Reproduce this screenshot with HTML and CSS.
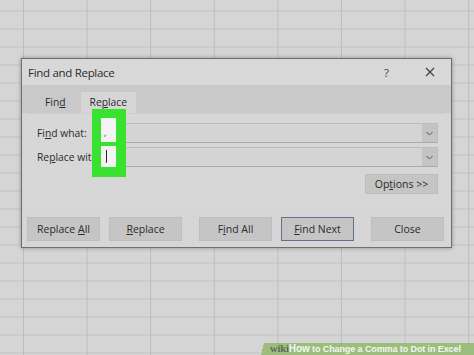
FILE: index.html
```html
<!DOCTYPE html>
<html lang="en">
<head>
  <meta charset="UTF-8" />
  <meta name="viewport" content="width=device-width, initial-scale=1.0"/>
  <title>Find and Replace</title>
  <link rel="stylesheet" href="styles.css">
</head>
<body>

  <!-- Spreadsheet behind the dialog -->
  <div class="sheet">

    <!-- The Find and Replace dialog -->
    <div class="dialog">
      <div class="titlebar">
        <span class="title">Find and Replace</span>
        <span class="help">?</span>
        <svg class="close-x" width="10" height="10" viewBox="0 0 10 10">
          <path d="M1 1 L9 9 M9 1 L1 9" stroke="#3c3c3c" stroke-width="1.1" fill="none"/>
        </svg>
      </div>

      <!-- Tabs -->
      <div class="tabs">
        <div class="tab">Fin<u>d</u></div>
        <div class="tab active">Re<u>p</u>lace</div>
      </div>

      <!-- Tab content -->
      <div class="panel">
        <div class="field-row">
          <label class="field-label">Fi<u>n</u>d what:</label>
          <div class="combo">
            <div class="combo-text"></div>
            <div class="combo-btn">
              <svg width="7" height="5" viewBox="0 0 7 5"><path d="M0.5 1 L3.5 4 L6.5 1" stroke="#555" fill="none"/></svg>
            </div>
          </div>
        </div>
        <div class="field-row">
          <label class="field-label">Re<u>p</u>lace with:</label>
          <div class="combo">
            <div class="combo-text"></div>
            <div class="combo-btn">
              <svg width="7" height="5" viewBox="0 0 7 5"><path d="M0.5 1 L3.5 4 L6.5 1" stroke="#555" fill="none"/></svg>
            </div>
          </div>
        </div>
        <div class="options-row">
          <div class="btn options-btn"><span>Op<u>t</u>ions &gt;&gt;</span></div>
        </div>
      </div>

      <!-- Bottom buttons -->
      <div class="button-row">
        <div class="btn"><span>Replace <u>A</u>ll</span></div>
        <div class="btn"><span><u>R</u>eplace</span></div>
        <div class="btn gap-left"><span>F<u>i</u>nd All</span></div>
        <div class="btn default"><span><u>F</u>ind Next</span></div>
        <div class="btn gap-left"><span>Close</span></div>
      </div>

      <!-- Green highlight over the two text boxes -->
      <div class="highlight">
        <div class="hl-box"><span class="comma">,</span></div>
        <div class="hl-box"><span class="cursor"></span><span class="dot">.</span></div>
      </div>
    </div>

    <!-- wikiHow caption -->
    <div class="caption">
      <span class="wiki">wiki</span><span class="how">How</span> to Change a Comma to Dot in Excel
    </div>
  </div>

</body>
</html>
```

FILE: styles.css
```css
/* Whole page */
body {
  margin: 0;
  padding: 0;
  font-family: "Open Sans", Arial, sans-serif;
  color: #2b2b2b;
}

/* Grey spreadsheet with cell lines */
.sheet {
  position: relative;
  width: 474px;
  height: 355px;
  overflow: hidden;
  background-color: #d5d5d5;
  background-image:
    linear-gradient(to right, #bdbdbd 1px, transparent 1px),
    linear-gradient(to bottom, #c2c2c2 1px, transparent 1px);
  background-size: 63.6px 100%, 100% 18px;
  background-position: 23px 0, 0 10.5px;
  padding-top: 58px;
  box-sizing: border-box;
}

/* Dialog window */
.dialog {
  position: relative;
  margin-left: 21px;
  width: 431px;
  height: 190px;
  box-sizing: border-box;
  border: 1px solid #6f6f6f;
  background-color: #d6d6d6;
  box-shadow: 0 0 4px rgba(0, 0, 0, 0.35);
}

.titlebar {
  display: flex;
  align-items: center;
  height: 26px;
  padding-left: 6px;
  font-size: 11.5px;
  background-color: #d8d8d8;
}

.title {
  flex: 1;
  letter-spacing: -0.3px;
}

.help {
  font-size: 11.5px;
  color: #444;
  margin-right: 36px;
}

.close-x {
  margin-right: 16px;
}

/* Tab strip */
.tabs {
  display: flex;
  align-items: flex-end;
  height: 28px;
  padding-left: 11px;
  background-color: #c9c9c9;
}

.tab {
  font-size: 10.3px;
  height: 21px;
  line-height: 20px;
  padding: 0 12px;
}

.tab.active {
  background-color: #d6d6d6;
  padding: 0 9px;
  margin-left: 3px;
}

/* Tab content panel */
.panel {
  margin: 0 7px 0 6px;
  height: 94px;
  padding: 9px 6px 0 9px;
  box-sizing: border-box;
  background-color: #d7d7d7;
  border-top: 1px solid #cfcfcf;
}

.field-row {
  display: flex;
  align-items: center;
  height: 20px;
  margin-bottom: 4px;
}

.field-label {
  width: 65px;
  font-size: 10.3px;
  white-space: nowrap;
}

.combo {
  flex: 1;
  display: flex;
  height: 20px;
  box-sizing: border-box;
  border: 1px solid #bcbcbc;
  border-bottom-color: #a9a9a9;
  background-color: #d4d4d4;
}

.combo-text {
  flex: 1;
}

.combo-btn {
  width: 15px;
  display: flex;
  align-items: center;
  justify-content: center;
  background-color: #c4c4c4;
}

.options-row {
  display: flex;
  justify-content: flex-end;
  margin-top: 7px;
}

/* Push buttons */
.btn {
  width: 73px;
  height: 24px;
  box-sizing: border-box;
  display: flex;
  align-items: center;
  justify-content: center;
  font-size: 10.5px;
  background-color: #c5c5c5;
  border: 1px solid #bdbdbd;
}

.options-btn {
  height: 20px;
}

.button-row {
  display: flex;
  gap: 9px;
  margin-top: 10px;
  padding-left: 5px;
}

.btn.gap-left {
  margin-left: 8px;
}

.btn.default {
  border: 1px solid #63728a;
}

/* Green highlight drawn over the text boxes */
.highlight {
  position: absolute;
  left: 70px;
  top: 50px;
  width: 34px;
  height: 68px;
  box-sizing: border-box;
  padding: 9px 0 0 9px;
  background-color: #38e22f;
}

.hl-box {
  position: relative;
  width: 15px;
  height: 24px;
  margin-bottom: 4px;
  background-color: #f4f4f4;
  font-size: 10px;
}

.hl-box:last-child {
  height: 21px;
}

.comma {
  position: absolute;
  left: 3px;
  top: 8px;
  font-size: 9px;
}

.cursor {
  position: absolute;
  left: 5px;
  top: 4px;
  width: 1px;
  height: 12px;
  background-color: #222;
}

.dot {
  position: absolute;
  left: 4px;
  top: 7px;
  font-size: 9px;
}

/* wikiHow caption at bottom right */
.caption {
  position: absolute;
  right: 0;
  bottom: 0;
  width: 204px;
  height: 12px;
  padding-left: 10px;
  font-family: "Liberation Sans", Arial, sans-serif;
  font-weight: bold;
  font-size: 9px;
  letter-spacing: -0.1px;
  line-height: 12px;
  color: #f4f7ef;
  white-space: nowrap;
  background: linear-gradient(105deg, transparent 4px, #9dbd7e 4px);
}

.wiki {
  font-family: "Liberation Serif", serif;
  font-size: 10.5px;
  color: #5f6b55;
}

.how {
  font-size: 10px;
}
```
